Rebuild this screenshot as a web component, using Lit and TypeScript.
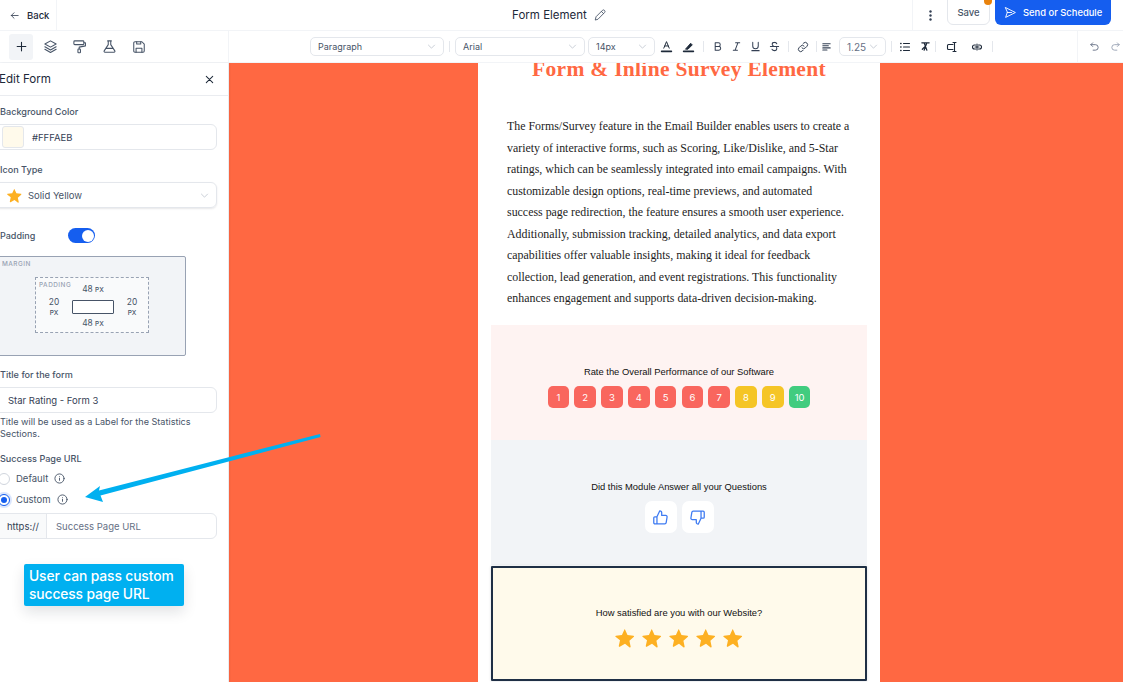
import { LitElement, html, css, svg } from "lit";
import { customElement } from "lit/decorators.js";

const chev = html`<svg class="chev" width="9" height="5" viewBox="0 0 10 6"><path d="M1 1l4 4 4-4" fill="none" stroke="#c5cad3" stroke-width="1.1"/></svg>`;
const ic = (body: unknown, size = 14, vb = 24, sw = 2, col = "#344054") =>
  html`<svg width=${size} height=${size} viewBox="0 0 ${vb} ${vb}" fill="none" stroke=${col} stroke-width=${sw} stroke-linecap="round" stroke-linejoin="round">${body}</svg>`;
const star = (s: number) => html`<svg width=${s} height=${s} viewBox="0 0 24 24"><path d="M12 1.8l3 6.6 7.2.8c.7.1 1 .9.5 1.4l-5.4 4.8 1.5 7.1c.1.7-.6 1.2-1.2.9L12 19l-6.3 3.6c-.6.3-1.3-.2-1.2-.9l1.5-7.1L.6 10.6c-.5-.5-.2-1.3.5-1.4l7.2-.8 3-6.6c.2-.5.5-.5.7 0z" fill="#FDB022"/></svg>`;
const info = html`<svg width="11" height="11" viewBox="0 0 24 24" fill="none" stroke="#475467" stroke-width="2" stroke-linecap="round"><circle cx="12" cy="12" r="10"/><path d="M12 16v-4.5M12 8h.01"/></svg>`;

const body = [
  "The Forms/Survey feature in the Email Builder enables users to create a",
  "variety of interactive forms, such as Scoring, Like/Dislike, and 5-Star",
  "ratings, which can be seamlessly integrated into email campaigns. With",
  "customizable design options, real-time previews, and automated",
  "success page redirection, the feature ensures a smooth user experience.",
  "Additionally, submission tracking, detailed analytics, and data export",
  "capabilities offer valuable insights, making it ideal for feedback",
  "collection, lead generation, and event registrations. This functionality",
  "enhances engagement and supports data-driven decision-making.",
];

@customElement("app-root")
export class AppRoot extends LitElement {
  static styles = css`
    :host { display: block; width: 1123px; height: 682px; position: relative; overflow: hidden; background: #fff; font-family: Inter, "Liberation Sans", sans-serif; color: #344054; }
    svg { display: block; flex: none; }
    .top { height: 31px; box-sizing: border-box; border-bottom: 1px solid #f2f4f7; display: grid; grid-template-columns: 1fr auto 1fr; align-items: stretch; }
    .back { border-right: 1px solid #f2f4f7; display: flex; align-items: center; gap: 7px; padding-left: 9px; margin-right: auto; width: 47px; font-size: 9.5px; font-weight: 500; color: #1d2939; }
    .title { display: flex; align-items: center; gap: 6px; font-size: 11.5px; color: #1d2939; padding-right: 4px; }
    .tr { display: flex; align-items: flex-start; justify-content: flex-end; padding-right: 12px; }
    .dots { border-left: 1px solid #f2f4f7; height: 30px; width: 34px; display: flex; align-items: center; justify-content: center; }
    .save { position: relative; width: 43px; height: 26px; box-sizing: border-box; margin-top: -1px; margin-right: 5px; border: 1px solid #e4e7ec; border-radius: 0 0 6px 6px; display: flex; align-items: center; justify-content: center; font-size: 9.5px; font-weight: 500; color: #475467; }
    .dot { position: absolute; right: -3px; top: -3px; width: 8px; height: 8px; border-radius: 50%; background: #E8820C; }
    .send { width: 116px; height: 25px; background: #155EEF; border-radius: 0 0 6px 6px; color: #fff; font-size: 9.4px; font-weight: 500; display: flex; align-items: center; padding-left: 9px; gap: 6px; box-sizing: border-box; }
    .bar { height: 32px; box-sizing: border-box; border-bottom: 1px solid #f2f4f7; display: flex; }
    .tools { border-right: 1px solid #f2f4f7; display: flex; align-items: center; padding-left: 9px; width: 219px; }
    .tile { width: 24px; height: 26px; background: #f2f4f7; border-radius: 3px; display: flex; align-items: center; justify-content: center; margin-right: 2px; }
    .tools .t { width: 30px; display: flex; justify-content: center; margin-right: -0.3px; }
    .fmt { flex: 1; display: flex; align-items: center; padding-left: 81px; }
    .sel { height: 19px; box-sizing: border-box; border: 1px solid #e4e7ec; border-radius: 5px; display: flex; align-items: center; justify-content: space-between; padding: 0 7px; font-size: 9px; color: #475467; }
    .div { width: 1px; height: 11px; background: #e4e7ec; flex: none; }
    .b { display: flex; justify-content: center; align-items: center; width: 19px; flex: none; font-size: 10px; }
    .hist { width: 46px; border-left: 1px solid #f2f4f7; display: flex; align-items: center; gap: 10px; padding-left: 11px; box-sizing: border-box; }
    .main { display: flex; height: 619px; }
    .side { width: 229px; flex: none; border-right: 1px solid #eaecf0; box-sizing: border-box; box-shadow: 1px 0 2px rgba(16,24,40,.05); overflow: hidden; position: relative; }
    .head { height: 32px; border-bottom: 1px solid #eaecf0; display: flex; align-items: center; justify-content: space-between; padding: 0 13px 0 0; font-size: 11.6px; color: #1d2939; margin-left: -1px; margin-bottom: 10px; }
    .form { margin-left: -6px; width: 223px; padding-left: 6px; box-sizing: border-box; font-size: 9.6px; }
    .lab { height: 12px; line-height: 12px; font-weight: 500; font-size: 9.1px; color: #475467; margin-bottom: 6px; }
    .inp { margin-left: -6px; height: 26px; box-sizing: border-box; border: 1px solid #e4e7ec; border-radius: 6px; display: flex; align-items: center; font-size: 9.5px; color: #344054; padding-left: 13px; }
    .swatch { width: 22px; height: 22px; box-sizing: border-box; background: #FFFAEB; border: 1px solid #e4e7ec; border-radius: 3px; margin-right: 8px; }
    .pad { display: flex; align-items: center; height: 15px; margin-top: 20px; font-size: 9px; color: #475467; font-weight: 500; }
    .tog { margin-left: 33px; width: 27px; height: 15px; border-radius: 8px; background: #155EEF; position: relative; }
    .tog::after { content: ""; position: absolute; right: 1.5px; top: 1.5px; width: 12px; height: 12px; border-radius: 50%; background: #fff; }
    .mbox { margin-top: 13px; margin-left: -6px; width: 192px; height: 100px; box-sizing: border-box; background: #f2f4f7; border: 1px solid #98a2b3; border-radius: 2px; padding: 3px 0 0 7px; }
    .cap { font-size: 6.4px; letter-spacing: .5px; color: #98a2b3; font-weight: 500; height: 11px; }
    .pbox { margin: 6px 0 0 33px; width: 114px; height: 56px; box-sizing: border-box; border: 1px dashed #98a2b3; background: #f9fafb; position: relative; display: grid; grid-template-columns: 36px 42px 36px; grid-template-rows: 22px 14px 18px; justify-items: center; align-items: center; font-size: 8px; color: #475467; }
    .pbox .cap { position: absolute; left: 3px; top: 3px; }
    .v { font-size: 8.4px; text-align: center; line-height: 10px; }
    .v small { font-size: 6.5px; font-weight: 500; }
    .core { width: 42px; height: 14px; box-sizing: border-box; background: #fff; border: 1px solid #475467; border-radius: 1px; }
    .help { margin: 3px 0 0 0; font-size: 9.1px; line-height: 12px; color: #475467; width: 205px; }
    .radio { display: flex; align-items: center; height: 21px; font-size: 9.5px; color: #475467; gap: 6px; }
    .rc { width: 12px; height: 12px; box-sizing: border-box; border: 1px solid #d0d5dd; border-radius: 50%; margin-left: -2px; background: #fff; }
    .rc.on { border-color: #155EEF; box-shadow: 0 0 0 2px #dbe6fd; display: flex; align-items: center; justify-content: center; }
    .rc.on::after { content: ""; width: 6px; height: 6px; border-radius: 50%; background: #155EEF; }
    .pre { margin-left: -13px; width: 52px; padding-left: 12px; box-sizing: border-box; height: 100%; display: flex; align-items: center; background: #f9fafb; border-right: 1px solid #e4e7ec; border-radius: 6px 0 0 6px; margin-right: 9px; color: #344054; flex: none; }
    .canvas { flex: 1; background: #FF6842; display: flex; padding-left: 249px; overflow: hidden; }
    .page { width: 402px; height: 619px; background: #fff; flex: none; padding: 0 13px; box-sizing: border-box; }
    h1 { margin: 0; height: 53px; font: 700 21.5px/12px "Liberation Serif", serif; color: #FF6842; text-align: center; letter-spacing: .3px; }
    .txt { font: 11.9px/21.5px "Liberation Serif", serif; color: #1d1d1d; padding-left: 16px; height: 209px; white-space: nowrap; }
    .blk { width: 376px; display: flex; flex-direction: column; align-items: center; font-family: "Liberation Sans", Arial, sans-serif; font-size: 9.4px; color: #111; box-sizing: border-box; }
    .rate { height: 115px; background: #FEF3F2; padding-top: 41px; }
    .nums { display: flex; gap: 5.3px; margin-top: 9px; }
    .n { width: 21.5px; height: 22px; border-radius: 5px; color: #fff; display: flex; align-items: center; justify-content: center; font: 9.5px Inter, sans-serif; }
    .like { height: 125px; background: #F2F4F7; padding-top: 41px; }
    .thumbs { display: flex; gap: 5px; margin-top: 9px; }
    .th { width: 32px; height: 32px; background: #fff; border-radius: 7px; display: flex; align-items: center; justify-content: center; }
    .stars { height: 115px; margin-top: 1px; background: #FFFAEB; border: 2px solid #1f2f45; border-radius: 1px; padding-top: 39px; box-shadow: 0 0 3px rgba(16,24,40,.15); }
    .ss { display: flex; gap: 7px; margin-top: 10px; }
    .arrow { position: absolute; left: 0; top: 0; pointer-events: none; }
    .note { position: absolute; left: 24px; top: 564px; width: 160px; height: 42px; box-sizing: border-box; background: #00B0F0; border-radius: 2px; color: #fff; font: 500 13.8px/17.5px Inter, "Liberation Sans", sans-serif; padding: 4px 0 0 5px; box-shadow: 0 6px 14px rgba(16,24,40,.12); letter-spacing: -.1px; }
  `;

  render() {
    const colors = ["#F9665E","#F9665E","#F9665E","#F9665E","#F9665E","#F9665E","#F9665E","#F5C526","#F5C526","#41CC7F"];
    return html`
      <div class="top">
        <div class="back">${ic(svg`<path d="M20 12H5M11 6l-6 6 6 6"/>`, 11, 24, 1.8)}<span>Back</span></div>
        <div class="title"><span>Form Element</span>${ic(svg`<path d="M4 20l1.2-5L16 4.2a2.6 2.6 0 013.8 3.6L9 18.8z"/><path d="M14.5 6l3.5 3.5"/>`, 14, 24, 1.5, "#475467")}</div>
        <div class="tr">
          <div class="dots"><svg width="3" height="11" viewBox="0 0 3 11"><circle cx="1.5" cy="1.5" r="1.2" fill="#344054"/><circle cx="1.5" cy="5.5" r="1.2" fill="#344054"/><circle cx="1.5" cy="9.5" r="1.2" fill="#344054"/></svg></div>
          <div class="save">Save<span class="dot"></span></div>
          <div class="send">${ic(svg`<path d="M3 3l18 9-18 9 3-9zM6 12h8"/>`, 13, 24, 1.7, "#fff")}<span>Send or Schedule</span></div>
        </div>
      </div>
      <div class="bar">
        <div class="tools">
          <div class="tile">${ic(svg`<path d="M12 4v16M4 12h16"/>`, 13, 24, 2, "#1d2939")}</div>
          <div class="t">${ic(svg`<path d="M12 3l9 5-9 5-9-5z"/><path d="M3 12.5l9 5 9-5M3 16.5l9 5 9-5"/>`, 15, 24, 1.7, "#475467")}</div>
          <div class="t">${ic(svg`<rect x="3" y="3" width="16" height="6" rx="1.5"/><path d="M19 6h2.5v5l-10 2v3"/><rect x="9.5" y="16" width="4" height="6" rx="1"/>`, 15, 24, 1.7, "#475467")}</div>
          <div class="t">${ic(svg`<path d="M9 3h6M10 3v6l-6.5 10a1.5 1.5 0 001.3 2.3h14.4a1.5 1.5 0 001.3-2.3L14 9V3M7 15h10"/>`, 15, 24, 1.7, "#475467")}</div>
          <div class="t">${ic(svg`<path d="M5 3h12l4 4v12a2 2 0 01-2 2H5a2 2 0 01-2-2V5a2 2 0 012-2z"/><path d="M7 21v-7h10v7M8 3v4h7V3"/>`, 14, 24, 1.8, "#475467")}</div>
        </div>
        <div class="fmt">
          <div class="sel" style="width:134px">Paragraph${chev}</div>
          <div class="div" style="margin:0 5px"></div>
          <div class="sel" style="width:130px">Arial${chev}</div>
          <div class="sel" style="width:67px;margin-left:3px">14px${chev}</div>
          <div class="b" style="margin-left:2px">${ic(svg`<path d="M7 15l5-12 5 12M9 11h6"/><path d="M3 21h18" stroke-width="3"/>`, 13, 24, 1.8, "#1d2939")}</div>
          <div class="b" style="margin-left:3px">${ic(svg`<path d="M8 15l8-9 3 3-8 8H7z" fill="#1d2939"/><path d="M3 21h18" stroke-width="3"/>`, 13, 24, 1.6, "#1d2939")}</div>
          <div class="div" style="margin-left:5px"></div>
          <div class="b" style="margin-left:4px">${ic(svg`<path d="M7 4h7a4 4 0 010 8H7zM7 12h8a4 4 0 010 8H7z"/>`, 11, 24, 2.2)}</div>
          <div class="b">${ic(svg`<path d="M10 4h9M5 20h9M15 4L9 20"/>`, 11, 24, 2.2)}</div>
          <div class="b">${ic(svg`<path d="M6 3v8a6 6 0 0012 0V3M4 21h16"/>`, 11, 24, 2.2)}</div>
          <div class="b">${ic(svg`<path d="M17 6a5 4 0 00-5-3c-3 0-5 1.500-5 4 0 1.500.8 3 2.500 4M3 12h18M16.500 14c.4.8.5 1.500.5 2.500 0 2.800-2.200 4.500-5 4.500a6 5 0 01-5.500-3"/>`, 11, 24, 2.2)}</div>
          <div class="div" style="margin-left:4px"></div>
          <div class="b" style="margin-left:4px">${ic(svg`<path d="M10 14a4.500 4.500 0 006.500 0l3.500-3.500a4.600 4.600 0 00-6.500-6.500l-1.500 1.500M14 10a4.500 4.500 0 00-6.500 0L4 13.500A4.600 4.600 0 0010.500 20l1.500-1.500"/>`, 12, 24, 2)}</div>
          <div class="div" style="margin-left:4px"></div>
          <div class="b">${ic(svg`<path d="M4 6h16M4 10.500h12M4 15h16M4 19.500h9"/>`, 11, 24, 2.4)}</div>
          <div class="sel" style="width:47px;margin-left:3px;font-size:10px;color:#667085">1.25${chev}</div>
          <div class="div" style="margin-left:5px"></div>
          <div class="b" style="margin-left:2px;width:22px">${ic(svg`<path d="M9 5h12M9 12h12M9 19h12"/><path d="M3.500 5h.5M3.500 12h.5M3.500 19h.5" stroke-width="3"/>`, 12, 24, 2.2, "#1d2939")}</div>
          <div class="b">${ic(svg`<path d="M4 4h16M9 4l6 16M15 4L9 20M5 18l8-8"/>`, 11, 24, 2.6, "#1d2939")}</div>
          <div class="div"></div>
          <div class="b" style="margin-left:6px">${ic(svg`<path d="M14 7H5a2 2 0 00-2 2v6a2 2 0 002 2h9M17 3v18M14 3h6M14 21h6"/>`, 12, 24, 2.2, "#1d2939")}</div>
          <div class="b" style="margin-left:6px">${ic(svg`<path d="M9 8H7a4 4 0 000 8h2M15 8h2a4 4 0 010 8h-2M8 12h8M12 6v12"/>`, 12, 24, 2.2, "#1d2939")}</div>
          <div class="div" style="margin-left:6px"></div>
        </div>
        <div class="hist">
          ${ic(svg`<path d="M8 4L4 8l4 4"/><path d="M4 8h10a6 6 0 010 12H9"/>`, 11, 24, 2, "#667085")}
          ${ic(svg`<path d="M16 4l4 4-4 4"/><path d="M20 8H10a6 6 0 000 12h5"/>`, 11, 24, 2, "#98a2b3")}
        </div>
      </div>
      <div class="main">
        <aside class="side">
          <div class="head"><span>Edit Form</span>${ic(svg`<path d="M5 5l14 14M19 5L5 19"/>`, 11, 24, 2.2, "#1d2939")}</div>
          <div class="form">
            <div class="lab">Background Color</div>
            <div class="inp" style="padding-left:7px"><span class="swatch"></span>#FFFAEB</div>
            <div class="lab" style="margin-top:14px">Icon Type</div>
            <div class="inp" style="padding-left:12px;gap:6px;box-shadow:0 1px 2px rgba(16,24,40,.1);padding-right:7px;color:#475467">${star(15)}<span style="flex:1">Solid Yellow</span>${chev}</div>
            <div class="pad"><span>Padding</span><span class="tog"></span></div>
            <div class="mbox">
              <div class="cap">MARGIN</div>
              <div class="pbox">
                <span class="cap">PADDING</span>
                <span></span><span class="v">48 <small>PX</small></span><span></span>
                <span class="v">20<br /><small>PX</small></span><span class="core"></span><span class="v">20<br /><small>PX</small></span>
                <span></span><span class="v">48 <small>PX</small></span><span></span>
              </div>
            </div>
            <div class="lab" style="margin-top:13px">Title for the form</div>
            <div class="inp">Star Rating - Form 3</div>
            <div class="help">Title will be used as a Label for the Statistics Sections.</div>
            <div class="lab" style="margin-top:13px;margin-bottom:3px">Success Page URL</div>
            <div class="radio"><span class="rc"></span>Default ${info}</div>
            <div class="radio"><span class="rc on"></span>Custom ${info}</div>
            <div class="inp" style="margin-top:3px"><span class="pre">https://</span><span style="color:#667085">Success Page URL</span></div>
          </div>
        </aside>
        <div class="canvas">
          <div class="page">
            <h1>Form &amp; Inline Survey Element</h1>
            <div class="txt">${body.map((l) => html`<div>${l}</div>`)}</div>
            <div class="blk rate">
              <div>Rate the Overall Performance of our Software</div>
              <div class="nums">${colors.map((c, i) => html`<span class="n" style="background:${c}">${i + 1}</span>`)}</div>
            </div>
            <div class="blk like">
              <div>Did this Module Answer all your Questions</div>
              <div class="thumbs">
                <div class="th">${ic(svg`<path d="M7 11v10H4a1.500 1.500 0 01-1.500-1.500v-7A1.500 1.500 0 014 11zM7 11l4-8.500a2.700 2.700 0 012.700 2.700V9h5.600a2 2 0 012 2.300l-1.300 8a2 2 0 01-2 1.700H7"/>`, 17, 24, 1.8, "#3E7BF2")}</div>
                <div class="th">${ic(svg`<path d="M17 13V3h3a1.500 1.500 0 011.500 1.500v7A1.500 1.500 0 0120 13zM17 13l-4 8.500a2.700 2.700 0 01-2.700-2.700V15H4.700a2 2 0 01-2-2.300l1.300-8A2 2 0 016 3h11"/>`, 17, 24, 1.8, "#3E7BF2")}</div>
              </div>
            </div>
            <div class="blk stars">
              <div>How satisfied are you with our Website?</div>
              <div class="ss">${star(20)}${star(20)}${star(20)}${star(20)}${star(20)}</div>
            </div>
          </div>
        </div>
      </div>
      <svg class="arrow" width="1123" height="682" viewBox="0 0 1123 682">
        <path d="M320 434L99 490.500 100 486 85 497 103 502 100.500 495.500 320.500 437z" fill="#00B0F0"/>
      </svg>
      <div class="note">User can pass custom<br />success page URL</div>
    `;
  }
}
